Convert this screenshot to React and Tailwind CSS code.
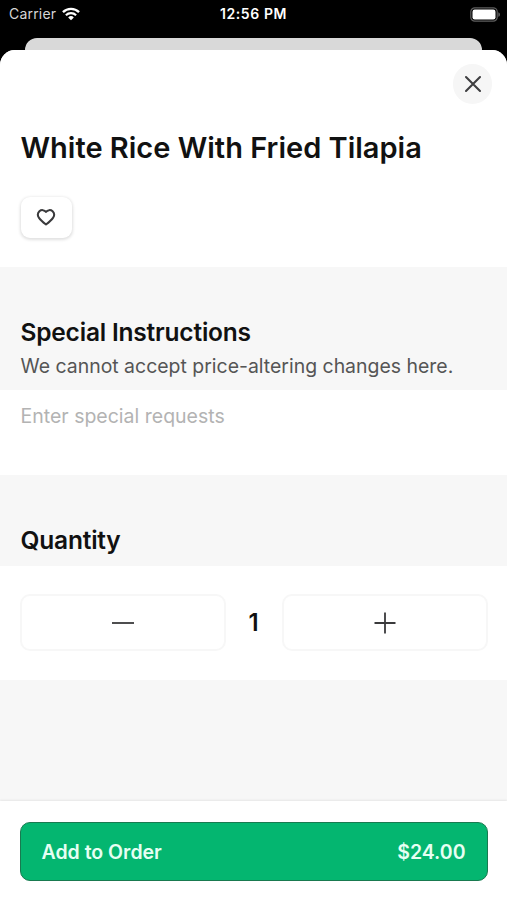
import { useState } from 'react'

const UNIT_PRICE = 24

function StatusBar() {
  return (
    <div className="grid h-[38px] grid-cols-3 items-start text-white">
      <div className="flex h-7 items-center gap-[6px] pl-[9px]">
        <span className="text-[14px] leading-7 tracking-[0.2px] text-[#d6d6d6]">Carrier</span>
        <svg className="h-[14px] w-[18px]" viewBox="0 0 19 14" fill="none" stroke="white">
          <path d="M1 5.1a12.2 12.2 0 0 1 17 0" strokeWidth="2.5" />
          <path d="M4.1 8.3a7.8 7.8 0 0 1 10.8 0" strokeWidth="2.3" />
          <path d="M9.5 13.6 6.5 10.7a4.3 4.3 0 0 1 6 0z" fill="white" stroke="none" />
        </svg>
      </div>
      <span className="text-center text-[14px] font-semibold leading-7 tracking-[0.6px]">12:56 PM</span>
      <div className="flex h-7 items-center justify-end pr-[6px]">
        <svg className="h-[15px] w-[31px]" viewBox="0 0 31 15" fill="none">
          <rect x="0.8" y="0.8" width="26.4" height="13.4" rx="4" stroke="#5e5e5e" strokeWidth="1.2" />
          <rect x="2.5" y="2.5" width="23" height="10" rx="2.2" fill="white" />
          <path d="M28.4 5.2c2 .8 2 3.8 0 4.6z" fill="#6b6b6b" />
        </svg>
      </div>
    </div>
  )
}

function StepButton({ label, onClick, children }) {
  return (
    <button
      type="button"
      aria-label={label}
      onClick={onClick}
      className="flex h-[57px] flex-1 items-center justify-center rounded-[10px] border-2 border-[#f7f7f7] bg-white"
    >
      <svg className="h-6 w-6" viewBox="0 0 24 24" fill="none" stroke="#3a3a3c" strokeWidth="1.8">
        {children}
      </svg>
    </button>
  )
}

function App() {
  const [quantity, setQuantity] = useState(1)
  const [requests, setRequests] = useState('')

  return (
    <div className="flex h-[900px] w-full flex-col overflow-hidden bg-black font-['Inter',sans-serif] text-[#111]">
      <StatusBar />
      <div className="mx-[25px] h-3 shrink-0 rounded-t-[12px] bg-[#d9d9d9]" />

      <div className="flex flex-1 flex-col overflow-hidden rounded-t-[15px] bg-[#f7f7f7]">
        <header className="h-[217px] bg-white px-[20.5px] pt-[14px]">
          <div className="-mr-[5.5px] flex justify-end">
            <button
              type="button"
              aria-label="Close"
              className="flex h-10 w-[39px] items-center justify-center rounded-full bg-[#f6f6f6]"
            >
              <svg className="h-5 w-5" viewBox="0 0 20 20" fill="none" stroke="#3f3f41" strokeWidth="2.1" strokeLinecap="round">
                <path d="M3 3l14 14M17 3L3 17" />
              </svg>
            </button>
          </div>
          <h1 className="mt-6 whitespace-nowrap text-[29px] font-semibold leading-10">
            White Rice With Fried Tilapia
          </h1>
          <button
            type="button"
            aria-label="Save item"
            className="mt-[29px] flex h-[41px] w-[51px] items-center justify-center rounded-[9px] bg-white shadow-[0_1px_3px_1px_rgba(0,0,0,0.12)]"
          >
            <svg className="h-5 w-5" viewBox="0 0 20 20" fill="none" stroke="#3a3a3c" strokeWidth="2" strokeLinejoin="round">
              <path d="M10 3.9C8.5 1.7 5.2 1.6 3.4 3.3 1.5 5.2 1.6 7.9 3 9.9 4.7 12.5 7.6 14.7 10 16.5 12.4 14.7 15.3 12.5 17 9.9 18.4 7.9 18.5 5.2 16.6 3.3 14.8 1.6 11.5 1.7 10 3.9z" />
            </svg>
          </button>
        </header>

        <div className="h-[123px] px-[20.5px] pt-[49px]">
          <h2 className="whitespace-nowrap text-[24.5px] font-semibold leading-8 tracking-[-0.2px]">Special Instructions</h2>
          <p className="mt-1 whitespace-nowrap text-[19.45px] leading-7 text-[#555]">
            We cannot accept price-altering changes here.
          </p>
        </div>
        <textarea
          value={requests}
          onChange={(e) => setRequests(e.target.value)}
          placeholder="Enter special requests"
          className="block h-[85px] w-full shrink-0 resize-none bg-white px-[20.5px] pt-3 text-[19.5px] leading-7 outline-none placeholder:text-[#b3b3b3]"
        />

        <div className="h-[91px] px-[20.5px] pt-12">
          <h2 className="pt-px text-[24.5px] font-semibold leading-8 tracking-[-0.2px]">Quantity</h2>
        </div>
        <div className="flex h-[114px] items-center bg-white pb-px pl-5 pr-[19px]">
          <StepButton label="Decrease quantity" onClick={() => setQuantity(Math.max(1, quantity - 1))}>
            <path d="M1 12h22" />
          </StepButton>
          <span className="w-14 pr-px pt-px text-center text-2xl font-semibold">{quantity}</span>
          <StepButton label="Increase quantity" onClick={() => setQuantity(quantity + 1)}>
            <path d="M1.5 12h21M12 1.5v21" />
          </StepButton>
        </div>

        <footer className="mt-auto h-[99px] bg-white pl-5 pr-[19px] pt-[21px] shadow-[0_-1px_2px_rgba(0,0,0,0.07)]">
          <button
            type="button"
            className="flex h-[59px] w-full items-center justify-between rounded-[10px] border border-[#197a50] bg-[#04b670] pl-[20.5px] pr-[21.5px] pt-0.5 text-[19.5px] font-semibold text-[#e6fff3]"
          >
            <span>Add to Order</span>
            <span>${(UNIT_PRICE * quantity).toFixed(2)}</span>
          </button>
        </footer>
      </div>
    </div>
  )
}

export default App
